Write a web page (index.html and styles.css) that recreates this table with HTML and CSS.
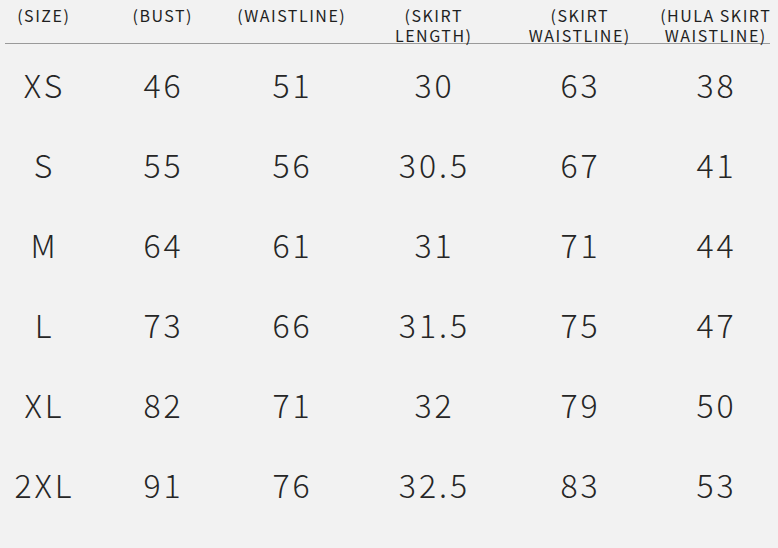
FILE: index.html
```html
<!DOCTYPE html>
<html>
<head>
<meta charset="utf-8">
<link rel="stylesheet" href="styles.css">
</head>
<body>
<div class="table">
  <div class="row head">
    <div class="cell"><span>(SIZE)</span></div>
    <div class="cell"><span>(BUST)</span></div>
    <div class="cell"><span>(WAISTLINE)</span></div>
    <div class="cell"><span>(SKIRT<br>LENGTH)</span></div>
    <div class="cell"><span>(SKIRT<br>WAISTLINE)</span></div>
    <div class="cell"><span>(HULA SKIRT<br>WAISTLINE)</span></div>
  </div>
  <div class="rule"></div>
  <div class="row body">
    <div class="cell"><span>XS</span></div><div class="cell"><span>46</span></div><div class="cell"><span>51</span></div><div class="cell"><span>30</span></div><div class="cell"><span>63</span></div><div class="cell"><span>38</span></div>
  </div>
  <div class="row body">
    <div class="cell"><span>S</span></div><div class="cell"><span>55</span></div><div class="cell"><span>56</span></div><div class="cell"><span>30.5</span></div><div class="cell"><span>67</span></div><div class="cell"><span>41</span></div>
  </div>
  <div class="row body">
    <div class="cell"><span>M</span></div><div class="cell"><span>64</span></div><div class="cell"><span>61</span></div><div class="cell"><span>31</span></div><div class="cell"><span>71</span></div><div class="cell"><span>44</span></div>
  </div>
  <div class="row body">
    <div class="cell"><span>L</span></div><div class="cell"><span>73</span></div><div class="cell"><span>66</span></div><div class="cell"><span>31.5</span></div><div class="cell"><span>75</span></div><div class="cell"><span>47</span></div>
  </div>
  <div class="row body">
    <div class="cell"><span>XL</span></div><div class="cell"><span>82</span></div><div class="cell"><span>71</span></div><div class="cell"><span>32</span></div><div class="cell"><span>79</span></div><div class="cell"><span>50</span></div>
  </div>
  <div class="row body">
    <div class="cell"><span>2XL</span></div><div class="cell"><span>91</span></div><div class="cell"><span>76</span></div><div class="cell"><span>32.5</span></div><div class="cell"><span>83</span></div><div class="cell"><span>53</span></div>
  </div>
</div>
</body>
</html>
```
FILE: styles.css
```css
html, body {
  margin: 0;
  padding: 0;
  overflow: hidden;
  background: #f2f2f2;
}
body {
  width: 778px;
  height: 548px;
  font-family: "Noto Sans CJK SC", "Noto Sans", sans-serif;
  color: #262626;
}
.table {
  width: 794px;
}
.row {
  display: grid;
  grid-template-columns: 86px 152px 106px 178px 114px 158px;
}
.cell {
  display: flex;
  justify-content: center;
  white-space: nowrap;
}
.head {
  box-sizing: border-box;
  height: 43px;
  padding-top: 5px;
  font-size: 16px;
  line-height: 20px;
  letter-spacing: 1.5px;
  font-weight: 400;
  color: #1f1f1f;
}
.head .cell span {
  text-align: center;
  margin-right: -1.5px;
}
.rule {
  margin-left: 5px;
  width: 765px;
  height: 1px;
  background: #9a9a9a;
}
.body {
  height: 80px;
  font-size: 32px;
  line-height: 80px;
  font-weight: 300;
  letter-spacing: 3px;
}
.body .cell span {
  margin-right: -3px;
}
```
